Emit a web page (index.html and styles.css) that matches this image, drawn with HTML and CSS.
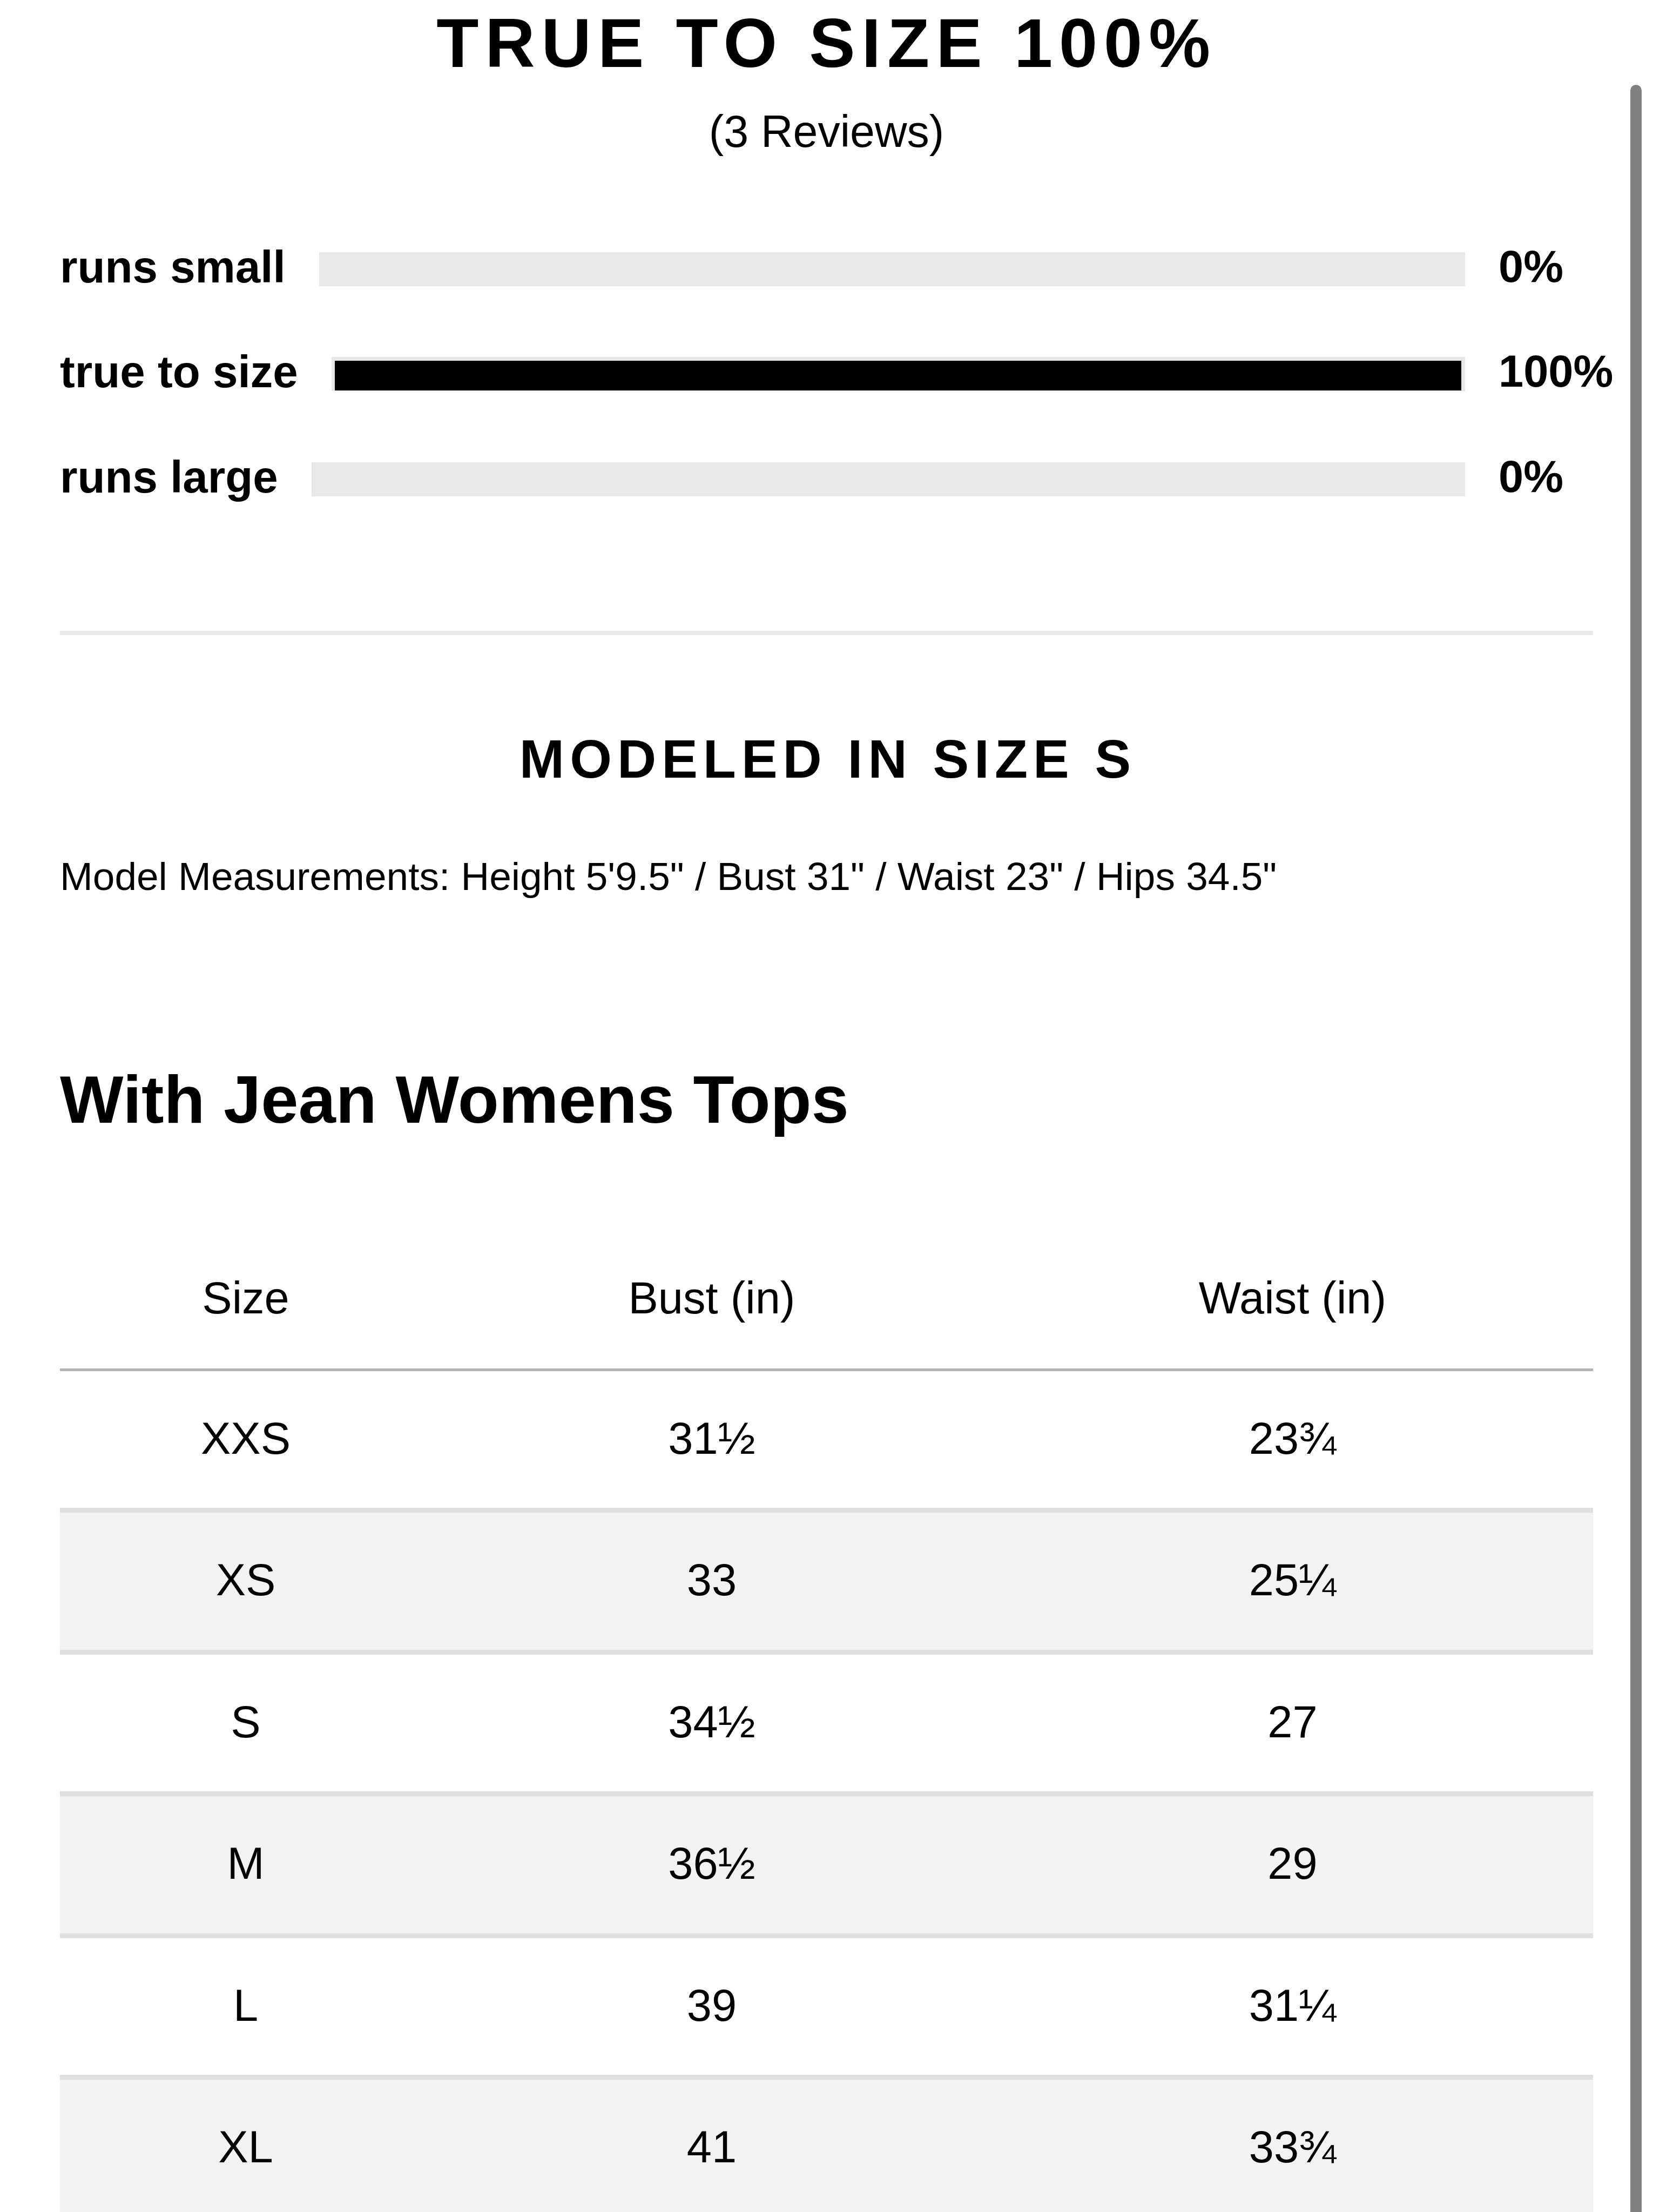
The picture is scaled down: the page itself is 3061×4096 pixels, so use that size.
FILE: index.html
```html
<!DOCTYPE html>
<html lang="en">
<head>
<meta charset="utf-8">
<title>Fit &amp; Size</title>
<link rel="stylesheet" href="styles.css">
</head>
<body>
<div class="scrollbar"></div>
<main class="page">
  <section class="fit">
    <h1 class="fit-title">TRUE TO SIZE 100%</h1>
    <p class="fit-count">(3 Reviews)</p>
    <div class="fit-rows">
      <div class="fit-row">
        <span class="fit-label">runs small</span>
        <div class="fit-track"><div class="fit-fill" style="width:0%"></div></div>
        <span class="fit-pct">0%</span>
      </div>
      <div class="fit-row">
        <span class="fit-label">true to size</span>
        <div class="fit-track"><div class="fit-fill" style="width:100%"></div></div>
        <span class="fit-pct">100%</span>
      </div>
      <div class="fit-row">
        <span class="fit-label">runs large</span>
        <div class="fit-track"><div class="fit-fill" style="width:0%"></div></div>
        <span class="fit-pct">0%</span>
      </div>
    </div>
  </section>

  <div class="divider"></div>

  <section class="model">
    <h2 class="model-title">MODELED IN SIZE S</h2>
    <p class="model-measure">Model Measurements: Height 5'9.5" / Bust 31" / Waist 23" / Hips 34.5"</p>
  </section>

  <section class="chart">
    <h2 class="chart-title">With Jean Womens Tops</h2>
    <table class="chart-table">
      <colgroup>
        <col class="col-size">
        <col class="col-bust">
        <col class="col-waist">
      </colgroup>
      <thead>
        <tr><th>Size</th><th>Bust (in)</th><th>Waist (in)</th></tr>
      </thead>
      <tbody>
        <tr><td>XXS</td><td>31½</td><td>23¾</td></tr>
        <tr><td>XS</td><td>33</td><td>25¼</td></tr>
        <tr><td>S</td><td>34½</td><td>27</td></tr>
        <tr><td>M</td><td>36½</td><td>29</td></tr>
        <tr><td>L</td><td>39</td><td>31¼</td></tr>
        <tr><td>XL</td><td>41</td><td>33¾</td></tr>
      </tbody>
    </table>
  </section>
</main>
</body>
</html>
```

FILE: styles.css
```css
html {
  overflow: hidden;
}

body {
  margin: 0;
  background: #ffffff;
  color: #000000;
  font-family: "Liberation Sans", Arial, Helvetica, sans-serif;
  position: relative;
}

.page {
  padding: 0 111px;
}

/* ---------- Fit summary ---------- */
.fit-title {
  margin: 0;
  font-size: 128px;
  line-height: 160px;
  font-weight: 700;
  letter-spacing: 11.9px;
  text-align: center;
}

.fit-count {
  margin: 32.6px 0 0;
  font-size: 82.5px;
  line-height: 100px;
  text-align: center;
}

.fit-rows {
  margin-top: 151px;
  display: flex;
  flex-direction: column;
  gap: 94.5px;
}

.fit-row {
  display: flex;
  align-items: flex-start;
  gap: 62px;
  height: 100px;
}

.fit-label {
  flex: none;
  font-size: 83.5px;
  line-height: 100px;
  font-weight: 700;
  white-space: nowrap;
}

.fit-track {
  flex: 1;
  margin-top: 23px;
  height: 55px;
  padding: 7px 7px 1px 6px;
  background: #e8e8e8;
}

.fit-fill {
  height: 100%;
  background: #000000;
}

.fit-pct {
  flex: none;
  width: 175px;
  font-size: 83px;
  line-height: 100px;
  font-weight: 700;
  white-space: nowrap;
}

.divider {
  margin-top: 235.4px;
  height: 8px;
  background: #e8e8e8;
}

/* ---------- Model ---------- */
.model-title {
  margin: 169.4px 0 0;
  font-size: 100px;
  line-height: 120px;
  font-weight: 700;
  letter-spacing: 10px;
  text-indent: 5px;
  text-align: center;
}

.model-measure {
  margin: 112.6px 0 0;
  font-size: 73px;
  line-height: 90px;
}

/* ---------- Size chart ---------- */
.chart-title {
  margin: 292.7px 0 0;
  font-size: 124.5px;
  line-height: 150px;
  font-weight: 700;
}

.chart-table {
  margin-top: 164.3px;
  width: 100%;
  table-layout: fixed;
  border-collapse: separate;
  border-spacing: 0;
  font-size: 83px;
  line-height: 100px;
}

.col-size { width: 688px; }
.col-bust { width: 1038px; }
.col-waist { width: auto; }

.chart-table th {
  padding: 79.4px 0;
  font-weight: 400;
  text-align: center;
  border-bottom: 5px solid #b3b3b3;
}

.chart-table td {
  padding: 75px 0 78.5px;
  text-align: center;
  border-bottom: 9px solid #dfdfdf;
}

.chart-table tbody tr:nth-child(even) td {
  background: #f2f2f2;
}

/* ---------- Overlay scrollbar ---------- */
.scrollbar {
  position: absolute;
  top: 157px;
  right: 21px;
  width: 21px;
  height: 4000px;
  background: #808080;
  border-radius: 11px 11px 0 0;
  z-index: 2;
}
```
